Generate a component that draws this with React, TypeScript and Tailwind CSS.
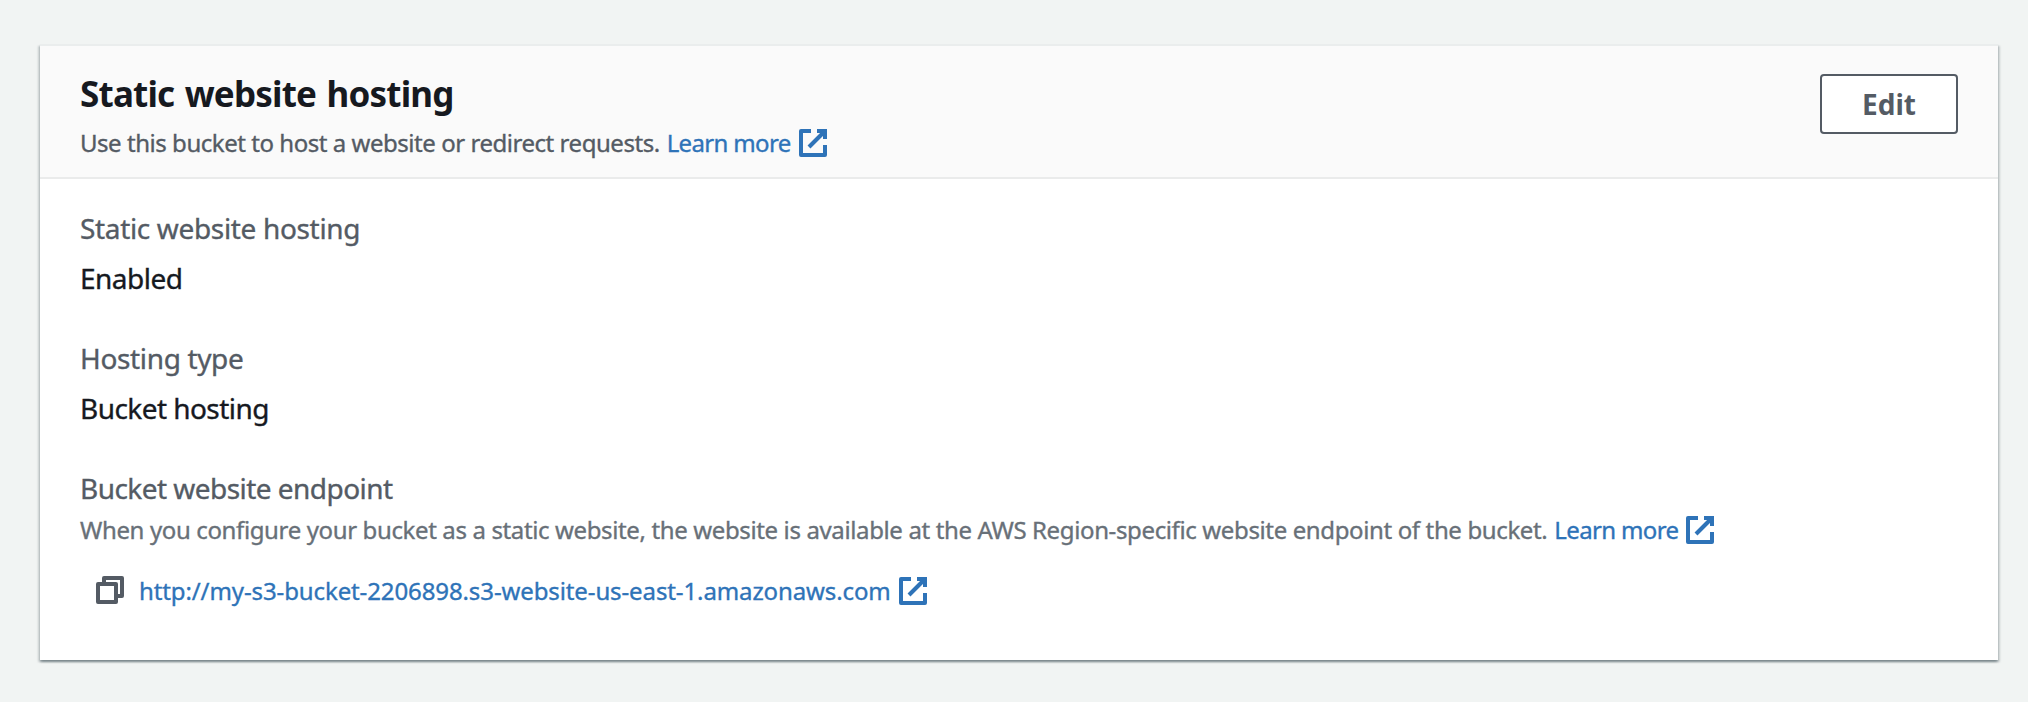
import type { ReactNode } from "react";

function ExternalIcon() {
  return (
    <svg viewBox="0 0 16 16" className="size-8 shrink-0" fill="none" stroke="currentColor" strokeWidth="2" aria-hidden="true">
      <path d="M10 2h4v4" />
      <path d="M6 10l8-8" />
      <path d="M14 9.048V14H2V2h5" strokeLinejoin="round" />
    </svg>
  );
}

function CopyIcon() {
  return (
    <svg viewBox="0 0 16 16" className="size-8 shrink-0" fill="none" stroke="currentColor" strokeWidth="2" strokeLinejoin="round" aria-hidden="true">
      <path d="M2 5h9v9H2z" />
      <path d="M5 5V2h9v9h-3" />
    </svg>
  );
}

function LearnMore() {
  return (
    <a href="#" className="flex items-center gap-1.5 text-[#2e73b8]">
      <span className="tracking-[-0.65px]">Learn more</span>
      <ExternalIcon />
    </a>
  );
}

function Label({ className, children }: { className: string; children: ReactNode }) {
  return <div className={`text-[28px] leading-[44px] text-[#545b64] ${className}`}>{children}</div>;
}

function Value({ className, children }: { className: string; children: ReactNode }) {
  return <div className={`mt-1.5 text-[28px] leading-[44px] text-[#16191f] ${className}`}>{children}</div>;
}

export default function App() {
  return (
    <main className="h-[702px] w-full bg-[#f1f4f3] pt-11 pr-[30px] pl-10 font-['Noto_Sans','Open_Sans',sans-serif] whitespace-nowrap [-webkit-text-stroke:0.35px]">
      <section className="flex h-[616px] flex-col border-t-2 border-[#eaeded] bg-white shadow-[0_2px_2px_0_rgba(0,28,36,0.3),2px_2px_2px_0_rgba(0,28,36,0.15),-2px_2px_2px_0_rgba(0,28,36,0.15)]">
        <header className="flex h-[133px] items-start justify-between border-b-2 border-[#eaebeb] bg-[#fafafa] pr-10 pl-10">
          <div className="pt-[26px]">
            <h2 className="text-[35px] leading-[44px] font-bold tracking-[-0.8px] text-[#16191f] [-webkit-text-stroke:0] [word-spacing:2px]">Static website hosting</h2>
            <div className="mt-[9px] flex h-9 items-center gap-[7px] text-[24px] leading-9">
              <p className="tracking-[-0.46px] text-[#545b64]">Use this bucket to host a website or redirect requests.</p>
              <LearnMore />
            </div>
          </div>
          <button className="mt-7 h-[60px] w-[138px] rounded-[4px] border-2 border-[#545b64] bg-white text-[28px] leading-[56px] font-bold text-[#545b64] [-webkit-text-stroke:0]">
            Edit
          </button>
        </header>

        <div className="flex flex-col gap-9 pt-[27px] pl-10">
          <div>
            <Label className="tracking-[-0.34px]">Static website hosting</Label>
            <Value className="tracking-[-0.5px]">Enabled</Value>
          </div>
          <div>
            <Label className="tracking-[-0.35px]">Hosting type</Label>
            <Value className="tracking-[-0.55px]">Bucket hosting</Value>
          </div>
          <div>
            <Label className="tracking-[-0.54px]">Bucket website endpoint</Label>
            <div className="mt-0.5 flex h-9 items-center gap-[7px] text-[24px] leading-9">
              <p className="tracking-[-0.37px] text-[#687078]">
                When you configure your bucket as a static website, the website is available at the AWS Region-specific website endpoint of the bucket.
              </p>
              <LearnMore />
            </div>
            <div className="mt-[25px] flex h-9 items-center pl-[14px] text-[24px] leading-9">
              <button className="mt-[-2px] text-[#545b64]" aria-label="Copy">
                <CopyIcon />
              </button>
              <a href="#" className="ml-[13px] flex items-center gap-1.5 text-[#2e73b8]">
                <span className="tracking-[-0.11px]">http://my-s3-bucket-2206898.s3-website-us-east-1.amazonaws.com</span>
                <ExternalIcon />
              </a>
            </div>
          </div>
        </div>
      </section>
    </main>
  );
}
